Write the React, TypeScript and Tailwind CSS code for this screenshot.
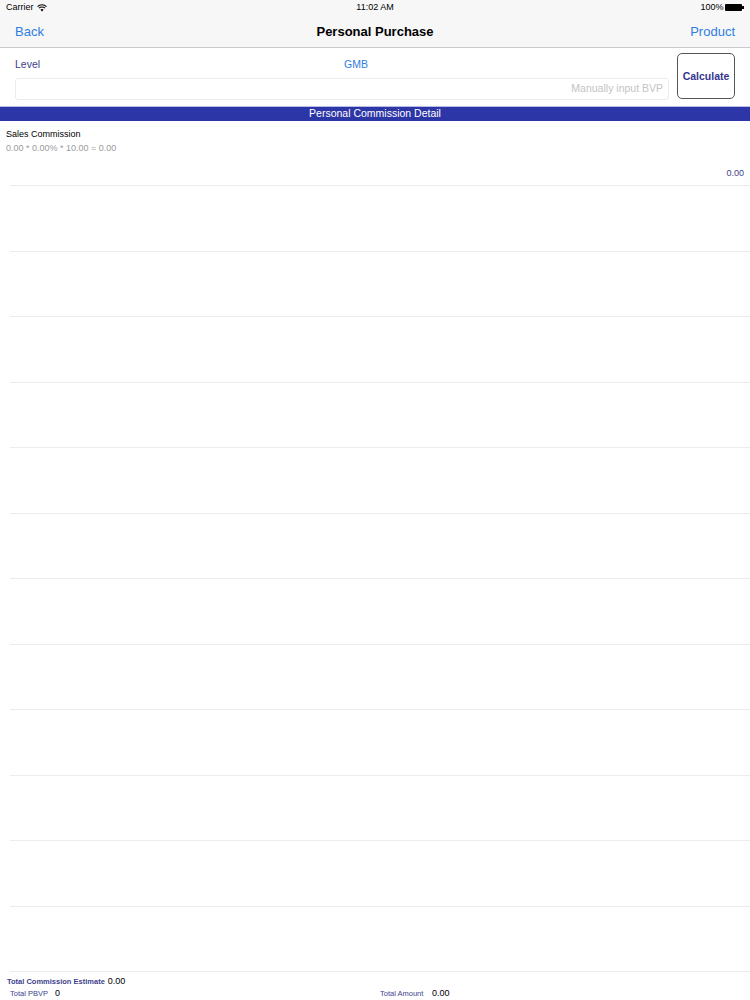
import React from "react";

const font = { fontFamily: '"Liberation Sans", Arial, sans-serif' };

function Wifi() {
  return (
    <svg width="10" height="8" viewBox="0 0 10 8" className="ml-[3px]">
      <path d="M0.5 2.6 A6.5 6.5 0 0 1 9.5 2.6" stroke="#000" strokeWidth="1.1" fill="none" />
      <path d="M2 4.2 A4.2 4.2 0 0 1 8 4.2" stroke="#000" strokeWidth="1.1" fill="none" />
      <path d="M5 7.6 L3.4 5.8 A2.2 2.2 0 0 1 6.6 5.8 Z" fill="#000" />
    </svg>
  );
}

function Battery() {
  return (
    <div className="flex items-center ml-[2px]">
      <div className="w-[17px] h-[7px] bg-black rounded-[1px]" />
      <div className="w-[1.5px] h-[3px] bg-black" />
    </div>
  );
}

export default function App() {
  const rows = Array.from({ length: 12 });
  return (
    <div className="w-[750px] h-[1000px] bg-white flex flex-col overflow-hidden" style={font}>
      {/* status + nav */}
      <div className="bg-[#f7f7f8] border-b border-[#c9c9ce]">
        <div className="h-[15px] flex items-center justify-between px-[6px] text-[9px] text-black">
          <div className="flex items-center w-[120px]">
            Carrier
            <Wifi />
          </div>
          <div className="font-medium">11:02 AM</div>
          <div className="flex items-center justify-end w-[120px]">
            100%
            <Battery />
          </div>
        </div>
        <div className="h-[32px] flex items-center justify-between px-[15px] pt-[2px]">
          <span className="text-[13px] text-[#2f7de1] w-[100px]">Back</span>
          <span className="text-[13px] font-bold text-black">Personal Purchase</span>
          <span className="text-[13px] text-[#2f7de1] w-[100px] text-right">Product</span>
        </div>
      </div>

      {/* level + input */}
      <div className="flex pl-[15px] pr-[15px] pt-[5px] pb-[6px] gap-[8px]">
        <div className="flex-1 flex flex-col">
          <div className="flex h-[25px] items-center pb-[2px] text-[10.5px]">
            <span className="text-[#3d3f8c] w-[329px]">Level</span>
            <span className="text-[#2f7de1]">GMB</span>
          </div>
          <div className="h-[22px] border border-[#ececec] rounded-[3px] flex items-center justify-end px-[5px] text-[10.5px] text-[#c4c4c4]">
            Manually input BVP
          </div>
        </div>
        <div className="w-[58px] h-[46px] border border-[#555] rounded-[5px] flex items-center justify-center pt-[2px] text-[10.5px] font-bold text-[#34348f]">
          Calculate
        </div>
      </div>

      {/* banner */}
      <div className="h-[15px] bg-[#2c36a6] border-t border-[#b8bde8] flex items-center justify-center text-[10.5px] text-white">
        Personal Commission Detail
      </div>

      {/* first row */}
      <div className="h-[65px] shrink-0 border-b border-[#ececec] ml-[10px] flex flex-col">
        <div className="-ml-[4px] pt-[8px] text-[9px] text-black font-medium leading-[11px]">Sales Commission</div>
        <div className="-ml-[4px] pt-[3px] text-[9px] text-[#9a9a9a] leading-[11px]">0.00 * 0.00% * 10.00 = 0.00</div>
        <div className="mt-[14px] pr-[6px] text-right text-[9px] text-[#3d3f8c] leading-[11px]">0.00</div>
      </div>

      {rows.map((_, i) => (
        <div key={i} className="h-[65.5px] shrink-0 border-b border-[#ececec] ml-[10px]" />
      ))}

      {/* footer */}
      <div className="flex-1 pt-[4px] px-[7px]">
        <div className="flex items-baseline gap-[3px] leading-[11px]">
          <span className="text-[7.5px] font-bold text-[#3d3f8c]">Total Commission Estimate</span>
          <span className="text-[9px] text-black">0.00</span>
        </div>
        <div className="flex items-baseline mt-[1px] leading-[11px]">
          <div className="w-[373px] flex items-baseline pl-[3px]">
            <span className="text-[7.5px] text-[#3d3f8c] w-[45px]">Total PBVP</span>
            <span className="text-[9px] text-black">0</span>
          </div>
          <span className="text-[7.5px] text-[#3d3f8c] w-[52px]">Total Amount</span>
          <span className="text-[9px] text-black">0.00</span>
        </div>
      </div>
    </div>
  );
}
